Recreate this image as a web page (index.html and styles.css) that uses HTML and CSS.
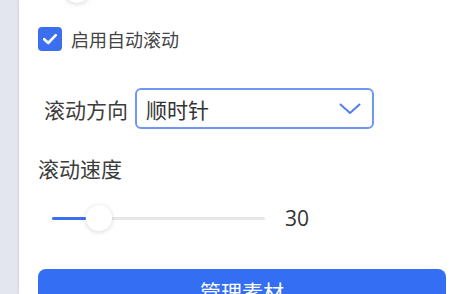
FILE: index.html
```html
<!DOCTYPE html>
<html>
<head>
<meta charset="utf-8">
<title>滚动设置</title>
<link rel="stylesheet" href="styles.css">
</head>
<body>
<div class="side"></div>
<div class="panel">
	<div class="prev-slider"><span class="thumb"></span></div>

	<label class="check-row">
		<span class="checkbox">
			<svg width="18" height="18" viewBox="0 0 18 18"><path d="M3.2 9.2 L7.2 13 L14.8 5.2" fill="none" stroke="#fff" stroke-width="2.6" stroke-linecap="round" stroke-linejoin="round"/></svg>
		</span>
		<span class="check-text">启用自动滚动</span>
	</label>

	<div class="field-row">
		<span class="field-label">滚动方向</span>
		<div class="select">
			<span class="select-value">顺时针</span>
			<svg class="chevron" width="22" height="12" viewBox="0 0 22 12"><path d="M1.5 1.5 L11 10 L20.5 1.5" fill="none" stroke="#4f7ff0" stroke-width="2" stroke-linecap="round" stroke-linejoin="round"/></svg>
		</div>
	</div>

	<div class="section-label">滚动速度</div>

	<div class="slider-row">
		<div class="track">
			<div class="fill" style="width:34px"></div>
			<span class="thumb"></span>
		</div>
		<span class="slider-value">30</span>
	</div>

	<button class="btn">管理素材</button>
</div>
</body>
</html>
```

FILE: styles.css
```css
html, body{
	margin:0;
	height:100%;
	overflow:hidden;
}
body{
	display:flex;
	font-family:"Noto Sans CJK SC","Noto Sans",sans-serif;
	color:#3a3a3a;
	background:#fff;
}
.side{
	width:19px;
	flex:none;
	background:#e3e6ee;
}
.panel{
	flex:1;
	display:flex;
	flex-direction:column;
	padding-left:19px;
	background:#fff;
	box-shadow:-1px 0 2px rgba(0,0,0,0.08);
}
.thumb{
	display:block;
	width:26px;
	height:26px;
	border-radius:50%;
	background:#fff;
	box-shadow:0 1px 5px rgba(0,0,0,0.16);
}
.prev-slider{
	height:26px;
	margin-top:-23px;
	padding-left:26px;
}
.check-row{
	display:flex;
	align-items:center;
	height:24px;
	margin-top:24px;
}
.checkbox{
	width:24px;
	height:24px;
	border-radius:4px;
	background:#3b6ff0;
	display:flex;
	align-items:center;
	justify-content:center;
}
.check-text{
	margin-left:9px;
	font-size:18px;
	color:#444;
}
.field-row{
	display:flex;
	align-items:center;
	margin-top:37px;
}
.field-label{
	margin-left:6px;
	font-size:21px;
	color:#3c3c3c;
}
.select{
	margin-left:7px;
	height:37px;
	border:2px solid #6f97f4;
	border-radius:6px;
	display:flex;
	align-items:center;
	justify-content:space-between;
	padding:0 11px 0 9px;
	box-sizing:content-box;
	width:215px;
}
.select-value{
	font-size:21px;
	color:#333;
}
.chevron{
	display:block;
}
.section-label{
	margin-top:25px;
	font-size:21px;
	line-height:28px;
	color:#3c3c3c;
}
.slider-row{
	display:flex;
	align-items:center;
	height:28px;
	margin-top:22px;
}
.track{
	position:relative;
	margin-left:14px;
	width:213px;
	height:3px;
	background:#e8e8e8;
	border-radius:2px;
}
.fill{
	height:3px;
	background:#3b6ff0;
	border-radius:2px;
}
.track .thumb{
	position:absolute;
	left:34px;
	top:-12px;
}
.slider-value{
	margin-left:20px;
	font-family:"Open Sans","Noto Sans",sans-serif;
	font-size:21px;
	color:#333;
}
.btn{
	margin-top:37px;
	width:408px;
	height:44px;
	border:none;
	border-radius:8px;
	background:#346ef2;
	color:#fff;
	font-family:"Noto Sans CJK SC",sans-serif;
	font-size:21px;
	padding:0;
	flex:none;
}
```
